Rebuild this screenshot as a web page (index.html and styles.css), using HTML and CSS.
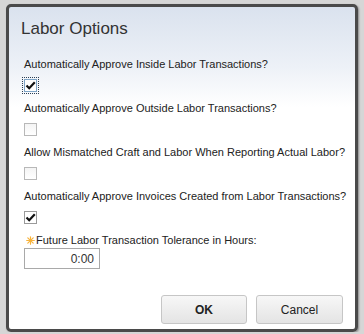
FILE: index.html
```html
<!DOCTYPE html>
<html lang="en">
<head>
    <meta charset="UTF-8">
    <title>Labor Options</title>
    <link rel="stylesheet" href="styles.css">
</head>
<body>
    <div class="dialog">
        <!-- header -->
        <div class="dialog-title">Labor Options</div>

        <!-- options -->
        <div class="dialog-body">
            <div class="option">
                <div class="option-label">Automatically Approve Inside Labor Transactions?</div>
                <span class="check checked focused">
                    <svg viewBox="0 0 13 13" width="13" height="13"><path d="M2.5 6.5 L5.2 9.2 L10.8 3.2" fill="none" stroke="#111" stroke-width="2.2"/></svg>
                </span>
            </div>
            <div class="option">
                <div class="option-label">Automatically Approve Outside Labor Transactions?</div>
                <span class="check"></span>
            </div>
            <div class="option">
                <div class="option-label">Allow Mismatched Craft and Labor When Reporting Actual Labor?</div>
                <span class="check"></span>
            </div>
            <div class="option">
                <div class="option-label">Automatically Approve Invoices Created from Labor Transactions?</div>
                <span class="check checked">
                    <svg viewBox="0 0 13 13" width="13" height="13"><path d="M2.5 6.5 L5.2 9.2 L10.8 3.2" fill="none" stroke="#111" stroke-width="2.2"/></svg>
                </span>
            </div>
            <div class="option last">
                <div class="option-label">
                    <svg class="required" viewBox="0 0 10 10" width="9" height="9">
                        <g stroke="#f7b23a" stroke-width="1.3" stroke-linecap="round">
                            <line x1="5" y1="0.8" x2="5" y2="9.2"/>
                            <line x1="0.8" y1="5" x2="9.2" y2="5"/>
                            <line x1="2" y1="2" x2="8" y2="8"/>
                            <line x1="8" y1="2" x2="2" y2="8"/>
                        </g>
                    </svg>Future Labor Transaction Tolerance in Hours:
                </div>
                <input class="hours" type="text" value="0:00">
            </div>
        </div>

        <!-- footer buttons -->
        <div class="dialog-footer">
            <button class="btn btn-ok">OK</button>
            <button class="btn">Cancel</button>
        </div>
    </div>
</body>
</html>
```

FILE: styles.css
```css
/* base */
body {
    margin: 0;
    background-color: #d6d6d6;
    font-family: "Liberation Sans", Arial, sans-serif;
    color: #222;
}
* {
    box-sizing: border-box;
}

/* dialog box */
.dialog {
    width: 352px;
    height: 328px;
    margin: 4px 0 0 6px;
    border: 3px solid #4a4a4a;
    border-radius: 5px;
    background: linear-gradient(#dae2ee 0px, #edf1f7 60px, #ffffff 100px);
    box-shadow: 1px 1px 2px rgba(0, 0, 0, 0.35);
    display: flex;
    flex-direction: column;
}
.dialog-title {
    font-size: 17px;
    line-height: 20px;
    color: #333;
    padding: 12px 0 0 12px;
}

/* options list */
.dialog-body {
    padding: 18px 0 0 15px;
}
.option {
    height: 44px;
}
.option-label {
    font-size: 11px;
    line-height: 14px;
    margin-bottom: 8px;
    white-space: nowrap;
}
.option.last .option-label {
    margin-bottom: 1px;
}
.required {
    vertical-align: -1px;
    margin: 0 1px 0 2px;
}

/* checkbox look */
.check {
    display: block;
    width: 13px;
    height: 13px;
    border: 1px solid #b8b8b8;
    background: linear-gradient(#f4f4f4, #ffffff);
    position: relative;
}
.check svg {
    position: absolute;
    left: 0;
    top: 0;
    margin: -1px 0 0 -1px;
}
.check.checked {
    border-color: #9a9a9a;
    background: #fff;
}
.check.focused {
    border-color: #7ea4c6;
    outline: 1px dotted #2b3f55;
    outline-offset: 1px;
}

.hours {
    display: block;
    width: 76px;
    height: 21px;
    border: 1px solid #a9a9a9;
    padding: 0 5px;
    text-align: right;
    font-family: inherit;
    font-size: 12px;
    color: #333;
}

/* buttons */
.dialog-footer {
    display: flex;
    justify-content: flex-end;
    gap: 9px;
    padding: 18px 12px 0 0;
}
.btn {
    width: 87px;
    height: 29px;
    border: 1px solid #c6c6c6;
    border-radius: 3px;
    background: linear-gradient(#f7f7f7, #e4e4e4);
    font-family: inherit;
    font-size: 12px;
    color: #222;
    padding: 0;
}
.btn-ok {
    width: 86px;
    font-weight: bold;
}
```
